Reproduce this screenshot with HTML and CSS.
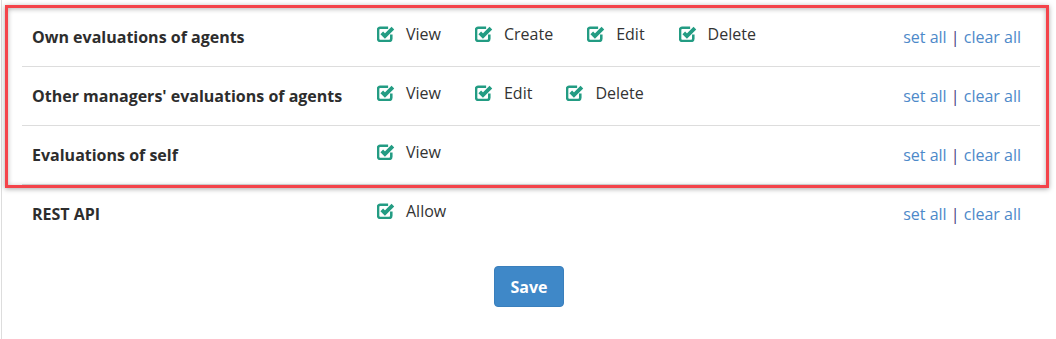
FILE: index.html
```html
<!DOCTYPE html>
<html lang="en">
  <head>
    <meta charset="UTF-8" />
    <meta name="viewport" content="width=device-width, initial-scale=1.0" />
    <title>Evaluation permissions</title>
    <link rel="stylesheet" href="styles.css">
  </head>
  <body>
    <div class="page">
      <div class="perm-list">
        <div class="perm-row">
          <div class="perm-name">Own evaluations of agents</div>
          <div class="perm-options">
            <label class="perm-option"><svg class="check" viewBox="0 0 17 16"><path d="M13.5 9v4a2 2 0 0 1-2 2h-8.5a2 2 0 0 1-2-2v-8.5a2 2 0 0 1 2-2h7.5"/><path class="tick" d="M4.5 7.5l3 3 7.5-7.5"/></svg>View</label>
            <label class="perm-option"><svg class="check" viewBox="0 0 17 16"><path d="M13.5 9v4a2 2 0 0 1-2 2h-8.5a2 2 0 0 1-2-2v-8.5a2 2 0 0 1 2-2h7.5"/><path class="tick" d="M4.5 7.5l3 3 7.5-7.5"/></svg>Create</label>
            <label class="perm-option"><svg class="check" viewBox="0 0 17 16"><path d="M13.5 9v4a2 2 0 0 1-2 2h-8.5a2 2 0 0 1-2-2v-8.5a2 2 0 0 1 2-2h7.5"/><path class="tick" d="M4.5 7.5l3 3 7.5-7.5"/></svg>Edit</label>
            <label class="perm-option"><svg class="check" viewBox="0 0 17 16"><path d="M13.5 9v4a2 2 0 0 1-2 2h-8.5a2 2 0 0 1-2-2v-8.5a2 2 0 0 1 2-2h7.5"/><path class="tick" d="M4.5 7.5l3 3 7.5-7.5"/></svg>Delete</label>
          </div>
          <div class="perm-actions"><a href="#">set all</a> <span class="sep">|</span> <a href="#">clear all</a></div>
        </div>
        <div class="perm-row">
          <div class="perm-name">Other managers' evaluations of agents</div>
          <div class="perm-options">
            <label class="perm-option"><svg class="check" viewBox="0 0 17 16"><path d="M13.5 9v4a2 2 0 0 1-2 2h-8.5a2 2 0 0 1-2-2v-8.5a2 2 0 0 1 2-2h7.5"/><path class="tick" d="M4.5 7.5l3 3 7.5-7.5"/></svg>View</label>
            <label class="perm-option"><svg class="check" viewBox="0 0 17 16"><path d="M13.5 9v4a2 2 0 0 1-2 2h-8.5a2 2 0 0 1-2-2v-8.5a2 2 0 0 1 2-2h7.5"/><path class="tick" d="M4.5 7.5l3 3 7.5-7.5"/></svg>Edit</label>
            <label class="perm-option"><svg class="check" viewBox="0 0 17 16"><path d="M13.5 9v4a2 2 0 0 1-2 2h-8.5a2 2 0 0 1-2-2v-8.5a2 2 0 0 1 2-2h7.5"/><path class="tick" d="M4.5 7.5l3 3 7.5-7.5"/></svg>Delete</label>
          </div>
          <div class="perm-actions"><a href="#">set all</a> <span class="sep">|</span> <a href="#">clear all</a></div>
        </div>
        <div class="perm-row">
          <div class="perm-name">Evaluations of self</div>
          <div class="perm-options">
            <label class="perm-option"><svg class="check" viewBox="0 0 17 16"><path d="M13.5 9v4a2 2 0 0 1-2 2h-8.5a2 2 0 0 1-2-2v-8.5a2 2 0 0 1 2-2h7.5"/><path class="tick" d="M4.5 7.5l3 3 7.5-7.5"/></svg>View</label>
          </div>
          <div class="perm-actions"><a href="#">set all</a> <span class="sep">|</span> <a href="#">clear all</a></div>
        </div>
        <div class="perm-row last">
          <div class="perm-name">REST API</div>
          <div class="perm-options">
            <label class="perm-option"><svg class="check" viewBox="0 0 17 16"><path d="M13.5 9v4a2 2 0 0 1-2 2h-8.5a2 2 0 0 1-2-2v-8.5a2 2 0 0 1 2-2h7.5"/><path class="tick" d="M4.5 7.5l3 3 7.5-7.5"/></svg>Allow</label>
          </div>
          <div class="perm-actions"><a href="#">set all</a> <span class="sep">|</span> <a href="#">clear all</a></div>
        </div>
      </div>

      <div class="form-actions">
        <button type="submit" class="save-btn">Save</button>
      </div>

      <!-- annotation box drawn over the first three rows -->
      <div class="highlight"></div>
    </div>
  </body>
</html>
```

FILE: styles.css
```css
body {
  margin: 0;
  font-family: "Open Sans", "Noto Sans", sans-serif;
  color: #333;
  background-color: #fff;
}

.page {
  position: relative;
  margin-left: 1px;
  border-left: 1px solid #ddd;
  min-height: 339px;
  padding-top: 8px;
  box-sizing: border-box;
}

.perm-list {
  margin: 0 16px 0 20px;
}

.perm-row {
  display: flex;
  align-items: center;
  height: 58px;
  border-bottom: 1px solid #ddd;
}

.perm-row.last {
  border-bottom: none;
}

.perm-name {
  width: 345px;
  padding-left: 10px;
  font-size: 16px;
  font-weight: bold;
  color: #2d2d2d;
}

.perm-options {
  flex: 1;
  display: flex;
  align-items: center;
  margin-top: -7px;
}

.perm-option {
  display: flex;
  align-items: center;
  margin-right: 34px;
  font-size: 16px;
  color: #333;
  cursor: pointer;
}

.check {
  width: 18px;
  height: 17px;
  margin-right: 11px;
  fill: none;
  stroke: #239c83;
  stroke-width: 2.4;
}

.check .tick {
  stroke-width: 3.6;
}

.perm-actions {
  padding-right: 19px;
  font-size: 16px;
}

.perm-actions a {
  color: #4d89c9;
  text-decoration: none;
}

.perm-actions .sep {
  color: #4a3a80;
}

.form-actions {
  text-align: center;
  margin-top: 23px;
}

.save-btn {
  width: 70px;
  height: 41px;
  font-family: "Open Sans", "Noto Sans", sans-serif;
  font-size: 16px;
  font-weight: bold;
  color: #fff;
  background-color: #3f88c8;
  border: 1px solid #3a7fbc;
  border-radius: 4px;
  cursor: pointer;
}

.highlight {
  position: absolute;
  left: 3px;
  top: 5px;
  width: 1038px;
  height: 177px;
  border: 3px solid #f4434a;
  box-shadow: 0 1px 5px rgba(0, 0, 0, 0.35), inset 0 1px 5px rgba(0, 0, 0, 0.3);
  pointer-events: none;
}
```
